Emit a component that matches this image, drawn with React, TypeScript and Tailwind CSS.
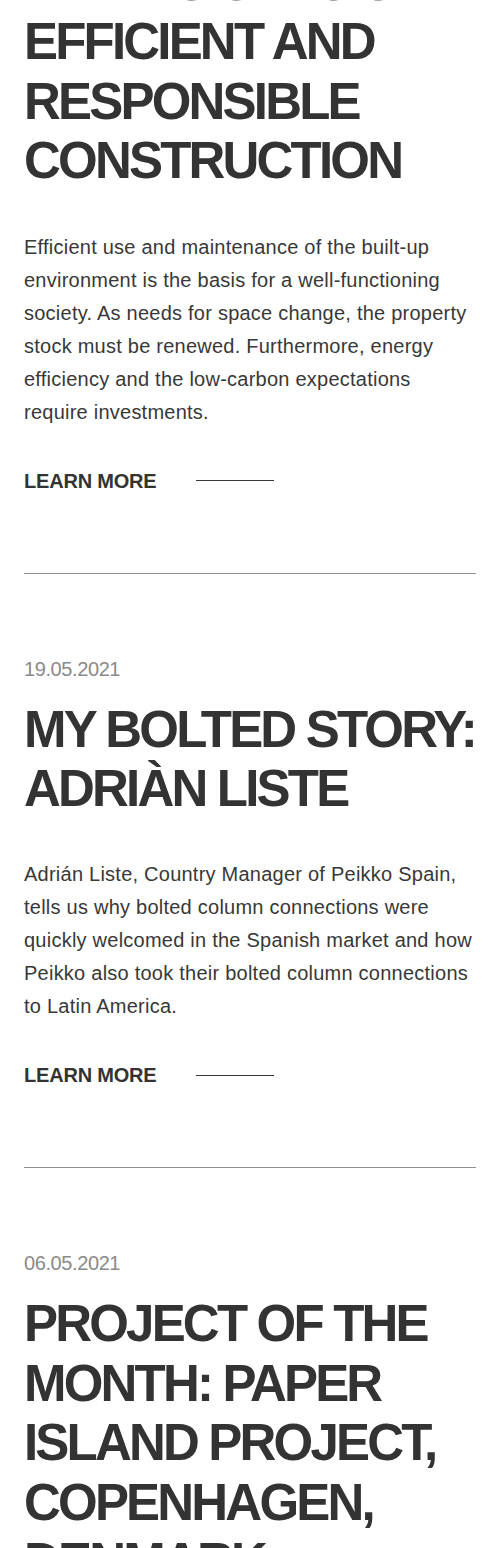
type Post = {
  date?: string;
  title: string[];
  body?: string;
};

const posts: Post[] = [
  {
    title: ["THEIR SIGHTS ON", "EFFICIENT AND", "RESPONSIBLE", "CONSTRUCTION"],
    body: "Efficient use and maintenance of the built-up environment is the basis for a well-functioning society. As needs for space change, the property stock must be renewed. Furthermore, energy efficiency and the low-carbon expectations require investments.",
  },
  {
    date: "19.05.2021",
    title: ["MY BOLTED STORY:", "ADRIÀN LISTE"],
    body: "Adrián Liste, Country Manager of Peikko Spain, tells us why bolted column connections were quickly welcomed in the Spanish market and how Peikko also took their bolted column connections to Latin America.",
  },
  {
    date: "06.05.2021",
    title: ["PROJECT OF THE", "MONTH: PAPER", "ISLAND PROJECT,", "COPENHAGEN,", "DENMARK"],
  },
];

function LearnMore() {
  return (
    <a href="#" className="mt-10 flex items-center gap-10 text-[20px] leading-6 font-bold tracking-[-0.01em] text-[#333]">
      LEARN MORE
      <span className="block h-px w-[78px] bg-[#3a3a3a]" />
    </a>
  );
}

function Article({ post, first }: { post: Post; first: boolean }) {
  return (
    <article>
      {post.date && (
        <div className="pt-[83px] text-[20px] leading-6 tracking-[-0.02em] text-[#8a8a8a]">{post.date}</div>
      )}
      <h2
        className={`text-[51px] leading-[59.4px] font-bold tracking-[-0.055em] text-[#333] ${
          first ? "-mt-[47px]" : "mt-[19px]"
        }`}
      >
        {post.title.map((line) => (
          <span key={line} className="block whitespace-nowrap">
            {line}
          </span>
        ))}
      </h2>
      {post.body && (
        <>
          <p className="mt-10 text-[20px] leading-[33px] tracking-[0.012em] text-[#383838]">{post.body}</p>
          <LearnMore />
          <div className="mt-20 h-px bg-[#8f8f8f]" />
        </>
      )}
    </article>
  );
}

export default function App() {
  return (
    <div className="h-[1548px] overflow-hidden bg-white font-['Liberation_Sans',Arial,sans-serif]">
      <div className="px-6">
        {posts.map((post, i) => (
          <Article key={i} post={post} first={i === 0} />
        ))}
      </div>
    </div>
  );
}
